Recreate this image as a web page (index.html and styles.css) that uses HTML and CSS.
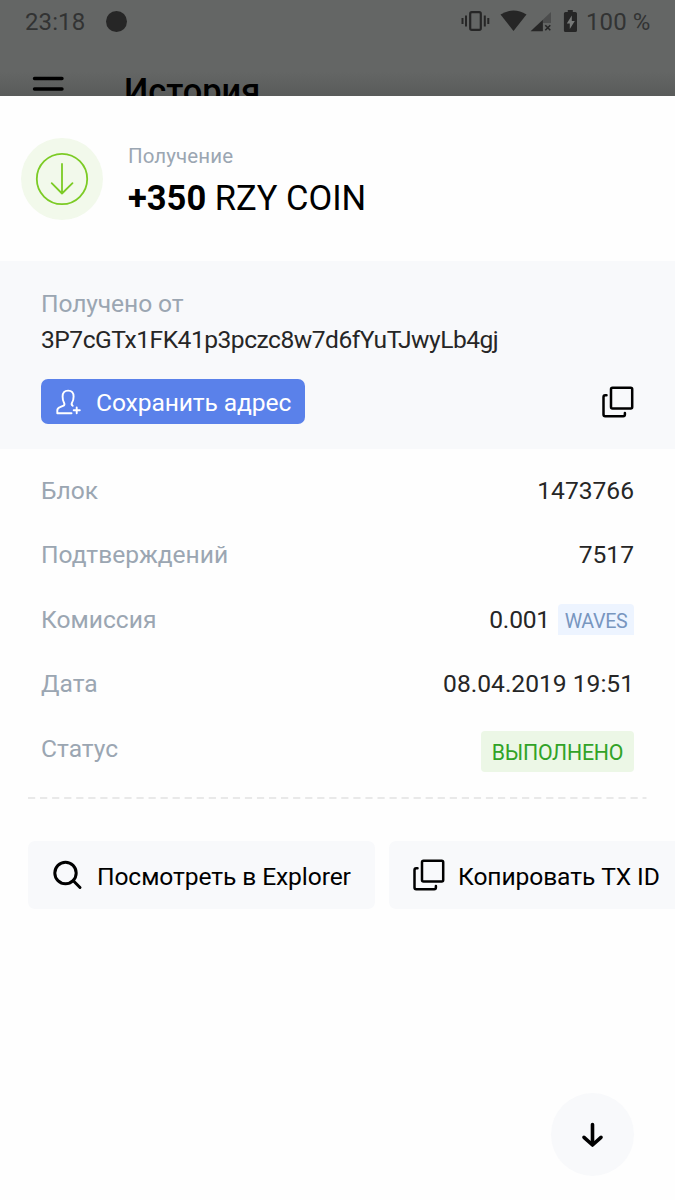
FILE: index.html
```html
<!DOCTYPE html>
<html lang="ru">
<head>
<meta charset="utf-8">
<title>История</title>
<link rel="stylesheet" href="styles.css">
</head>
<body>
<svg width="0" height="0" class="defs">
  <symbol id="copy" viewBox="0 0 32 32">
    <rect x="9" y="1.800" width="21.200" height="20.800" rx="1.500"/>
    <path d="M4.500 9.300H3.200Q1.500 9.300 1.500 11V28.600Q1.500 30.200 3.200 30.200H21.200Q22.900 30.200 22.900 28.500V27"/>
  </symbol>
</svg>
<div class="backdrop">
  <div class="status">
    <span class="clock">23:18</span><span class="dot"></span>
    <svg class="sys" width="120" height="26" viewBox="0 0 120 26">
      <rect x="10.200" y="2.200" width="10.600" height="17.600" rx="1.600" fill="none" stroke="#262626" stroke-width="2.200"/>
      <path d="M2.500 8v6M6 5.500v11M24.800 5.500v11M28.300 8v6" fill="none" stroke="#262626" stroke-width="2"/>
      <path d="M40.500 4.600Q53.500-3.800 66.500 4.600L53.500 21Z" fill="#262626"/>
      <path d="M91 2V13H83V21H70.700Z" fill="#4c4d4d"/>
      <path d="M82.800 10V21.300H70.700Z" fill="#262626"/>
      <path d="M85.300 15.300l5 5M90.300 15.300l-5 5" stroke="#262626" stroke-width="1.600"/>
      <path d="M107.800 0h5v2h2.500q1.700 0 1.700 1.500v17q0 1.500-1.700 1.500h-9.800q-1.600 0-1.600-1.500v-17q0-1.500 1.600-1.500h2.300Z" fill="#262626"/>
      <path d="M111.800 5.500l-5 8h3v5.500l5-8h-3Z" fill="#777978"/>
    </svg>
    <span class="percent">100 %</span>
  </div>
  <div class="appbar">
    <svg width="32" height="20" viewBox="0 0 32 20"><path d="M2.500 2.500H30M2.500 13H30" stroke="#000" stroke-width="3.400" stroke-linecap="round"/></svg>
    <span class="title">История</span>
  </div>
</div>
<main class="sheet">
  <header class="head">
    <svg width="82" height="82" viewBox="0 0 82 82">
      <circle cx="41" cy="41" r="41" fill="#f2f9eb"/>
      <g fill="none" stroke="#7ccb25" stroke-width="1.800" stroke-linecap="round" stroke-linejoin="round">
        <circle cx="41" cy="41" r="25.200"/><path d="M41 26V55.500M30.700 45.100L41 55.500L51.500 45.100"/>
      </g>
    </svg>
    <div class="headtext">
      <div class="kind"><span>Получение</span></div>
      <div class="amount"><b>+350</b> <span>RZY COIN</span></div>
    </div>
  </header>
  <section class="from">
    <div class="line muted">Получено от</div>
    <div class="line address">3P7cGTx1FK41p3pczc8w7d6fYuTJwyLb4gj</div>
    <div class="actions">
      <div class="save">
        <svg width="26" height="26" viewBox="0 0 26 26" fill="none" stroke="#fff" stroke-width="1.900" stroke-linecap="round" stroke-linejoin="round">
          <path d="M15.500 24.200H1.300V21.500Q1.300 19.200 4 18.200L7.600 16.700Q9 15.700 8 13.700Q6.600 11.400 6.600 7.600Q6.600 1.600 12.100 1.600Q17.600 1.600 17.600 7.600Q17.600 11.400 16 13.700Q15 15.700 16.700 16.700"/>
          <path d="M20.700 18.400V24.200M17.700 21.300H23.800"/>
        </svg>
        <span>Сохранить адрес</span>
      </div>
      <svg class="copy" width="32" height="32"><use href="#copy"/></svg>
    </div>
  </section>
  <section class="details">
    <div class="row"><span class="muted">Блок</span><span>1473766</span></div>
    <div class="row"><span class="muted">Подтверждений</span><span>7517</span></div>
    <div class="row"><span class="muted">Комиссия</span><span class="fee"><span>0.001</span><span class="waves">WAVES</span></span></div>
    <div class="row"><span class="muted">Дата</span><span>08.04.2019 19:51</span></div>
    <div class="row"><span class="muted">Статус</span><span class="done">ВЫПОЛНЕНО</span></div>
  </section>
  <svg class="rule" width="619" height="2"><path d="M0 1H618.500" stroke="#e9e9e9" stroke-width="2" stroke-dasharray="7.200 4.850"/></svg>
  <div class="buttons">
    <div class="button explorer">
      <svg width="30" height="30" viewBox="0 0 30 30" fill="none" stroke="#000" stroke-width="3" stroke-linecap="round"><circle cx="12.500" cy="13" r="10.700"/><path d="M20.300 20.800L27 27.500"/></svg>
      <span>Посмотреть в Explorer</span>
    </div>
    <div class="button txid">
      <svg class="copy" width="32" height="32"><use href="#copy"/></svg>
      <span>Копировать TX ID</span>
    </div>
  </div>
  <div class="down">
    <svg width="24" height="28" viewBox="0 0 24 28" fill="none" stroke="#000" stroke-width="3.600" stroke-linecap="round" stroke-linejoin="round"><path d="M11.500 3.500V24M3 16.300L11.500 24L20 16.300"/></svg>
  </div>
</main>
</body>
</html>
```
FILE: styles.css
```css
* { box-sizing: border-box; }
body { margin: 0; width: 675px; height: 1200px; overflow: hidden; background: #fefefe; color: #262626; font-family: Roboto, sans-serif; font-size: 24.6px; white-space: nowrap; }
svg { display: block; flex: none; }
.defs { position: absolute; }
.backdrop { height: 96px; overflow: hidden; background: linear-gradient(#646665 0 75%, #595b5a); }
.status { display: flex; height: 43px; padding: 0 25px; align-items: center; color: #323333; font-size: 24px; line-height: 44px; }
.clock { width: 81px; letter-spacing: .1px; }
.dot { width: 21px; height: 21px; border-radius: 50%; background: #262626; }
.sys { margin-left: auto; margin-right: 6px; margin-top: 3px; }
.percent { width: 64px; letter-spacing: .1px; }
.appbar { display: flex; padding-left: 32px; padding-top: 33px; }
.title { margin-left: 60px; font-size: 34.4px; font-weight: 500; line-height: 40px; margin-top: -5px; color: #000; }
.sheet { background: #fefefe; height: 1104px; }
.head { display: flex; height: 165px; padding: 42px 21px 0; }
.headtext { margin-left: 25px; }
.kind { font-size: 20.5px; line-height: 24px; margin-top: 6px; letter-spacing: .1px; color: #9ba6b2; }
.amount { font-size: 34.5px; line-height: 40px; margin-top: 10px; color: #000; }
.muted { color: #9ba6b2; }
.from { height: 188px; padding: 28px 41px 0; background: #f8f9fb; }
.from .muted { letter-spacing: -.1px; }
.line { height: 36.4px; line-height: 30px; }
.address { letter-spacing: -.5px; }
.actions { display: flex; justify-content: space-between; margin-top: 17.2px; }
.save { display: flex; width: 264px; height: 45px; padding: 10px 0 0 15px; border-radius: 7px; background: #5a81ea; color: #fff; }
.save span { margin-left: 14px; line-height: 28px; letter-spacing: -.1px; }
.copy { fill: none; stroke: #000; stroke-width: 2.5; stroke-linecap: round; }
.from .copy { margin-top: 7px; }
.details { padding: 10px 41px 0; height: 348px; }
.row { display: flex; justify-content: space-between; height: 64.4px; line-height: 64.4px; }
.fee { display: flex; }
.waves { width: 76px; height: 31px; margin: 16px 0 0 8px; border-radius: 4px 4px 0 0; background: #edf4ff; color: #7896bf; font-size: 19.7px; letter-spacing: -.35px; line-height: 36px; text-align: center; }
.fee > span:first-child { letter-spacing: -.2px; }
.done { width: 153px; height: 41px; margin-top: 14px; border-radius: 4px; background: #ecf7e6; color: #31a327; font-size: 21.3px; letter-spacing: -.2px; line-height: 43px; text-align: center; }
.rule { margin-left: 28px; }
.buttons { display: flex; gap: 14px; margin: 42px 0 0 28px; overflow: hidden; }
.button { display: flex; flex: none; height: 68px; border-radius: 7px; background: #f8f9fb; color: #000; line-height: 71px; letter-spacing: -.1px; }
.explorer { width: 347px; padding-left: 25px; }
.explorer svg { margin-top: 19px; }
.explorer span { margin-left: 14px; }
.txid { width: 310px; padding-left: 24px; }
.txid svg { margin-top: 18px; }
.txid span { margin-left: 13px; }
.down { display: flex; width: 83px; height: 83px; margin: 184px 0 0 551px; align-items: center; justify-content: center; border-radius: 50%; background: #f8f9fb; }
```
